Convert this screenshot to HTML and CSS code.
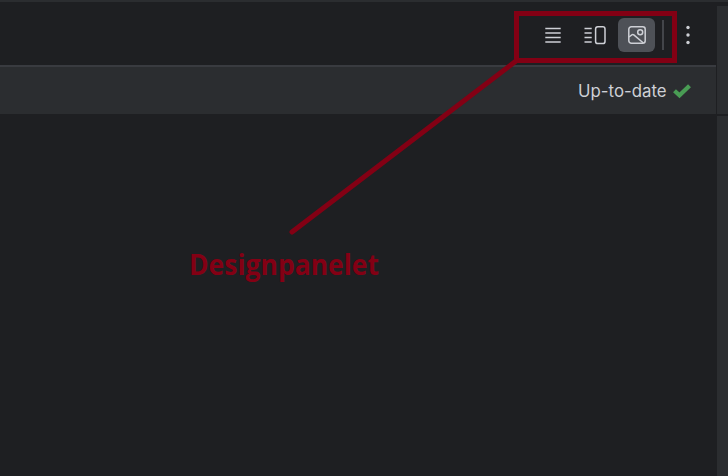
FILE: index.html
```html
<!DOCTYPE html>
<html lang="da">
<head>
<meta charset="utf-8">
<title>Designpanelet</title>
<link rel="stylesheet" href="styles.css">
</head>
<body>
<div class="window">
  <main class="editor">
    <header class="toolbar">
      <svg class="icon" viewBox="0 0 20 20"><path d="M2.3 3.5h15.4M2.3 8h15.4M2.3 12.5h15.4M2.3 17h15.4"/></svg>
      <svg class="icon split" viewBox="0 0 24 20"><path d="M1.5 3.5h7.2M1.5 8h7.2M1.5 12.5h7.2M1.5 17h7.2"/><rect x="12.6" y="1.8" width="9.4" height="16.8" rx="2.2"/></svg>
      <button class="selected"><svg class="icon" viewBox="0 0 20 20"><rect x="1.8" y="1.8" width="16.4" height="16.4" rx="2.5"/><circle cx="13.2" cy="7.2" r="2.5"/><path d="M2 12l3.2-2.3q.8-.5 1.6.2L16.4 18"/></svg></button>
      <span class="divider"></span>
      <svg class="more" viewBox="0 0 6 20"><circle cx="3" cy="2.5" r="1.7"/><circle cx="3" cy="10" r="1.7"/><circle cx="3" cy="17.5" r="1.7"/></svg>
    </header>
    <div class="status"><span>Up-to-date</span><svg class="check" viewBox="0 0 18 14"><path d="M1.5 6.7l5 4.6L16.5 1.8"/></svg></div>
  </main>
  <aside class="side"><div class="side-head"></div><div class="side-body"></div></aside>
</div>
<svg class="annotation" viewBox="0 0 728 476">
  <rect x="516.5" y="13.5" width="158" height="47"/>
  <path d="M516 61L292 232"/>
  <text x="189" y="275" textLength="190" lengthAdjust="spacingAndGlyphs">Designpanelet</text>
</svg>
</body>
</html>
```
FILE: styles.css
```css
body { margin: 0; background: #1e1f22; overflow: hidden; }
.window { box-sizing: border-box; display: flex; width: 728px; height: 476px; border-top: 2px solid #2b2d30; }
.editor { flex: 1; }
.toolbar { box-sizing: border-box; display: flex; align-items: center; justify-content: flex-end; height: 63px; padding: 3px 25px 0 0; }
.icon { display: block; flex: none; width: 20px; height: 20px; fill: none; stroke: #ced0d6; stroke-width: 1.5; }
.split { width: 24px; margin: 0 11px 0 20px; }
.selected { display: flex; flex: none; align-items: center; justify-content: center; width: 37px; height: 34px; padding: 0; border: 0; border-radius: 6px; background: #4e5157; }
.divider { width: 2px; height: 30px; margin: 0 21px 0 7px; background: #43454a; }
.more { width: 6px; height: 20px; fill: #ced0d6; }
.status { box-sizing: border-box; display: flex; align-items: center; justify-content: flex-end; height: 49px; padding-right: 25px; gap: 6.5px; border-top: 2px solid #393b40; background: #2b2d30; color: #ced0d6; font: 16.8px/24px Inter, sans-serif; }
.check { width: 18px; height: 14px; fill: none; stroke: #499c54; stroke-width: 4.2; overflow: visible; }
.side { display: flex; flex-direction: column; width: 11px; margin-left: 1px; padding-top: 4px; gap: 2px; }
.side-head { height: 108px; background: #2b2d30; }
.side-body { flex: 1; background: #2b2d30; }
.annotation { position: absolute; top: 0; left: 0; width: 728px; height: 476px; fill: none; stroke: #830014; stroke-width: 5; stroke-linecap: round; pointer-events: none; }
.annotation text { fill: #830014; stroke: none; font: 700 28px "Open Sans", sans-serif; }
```
